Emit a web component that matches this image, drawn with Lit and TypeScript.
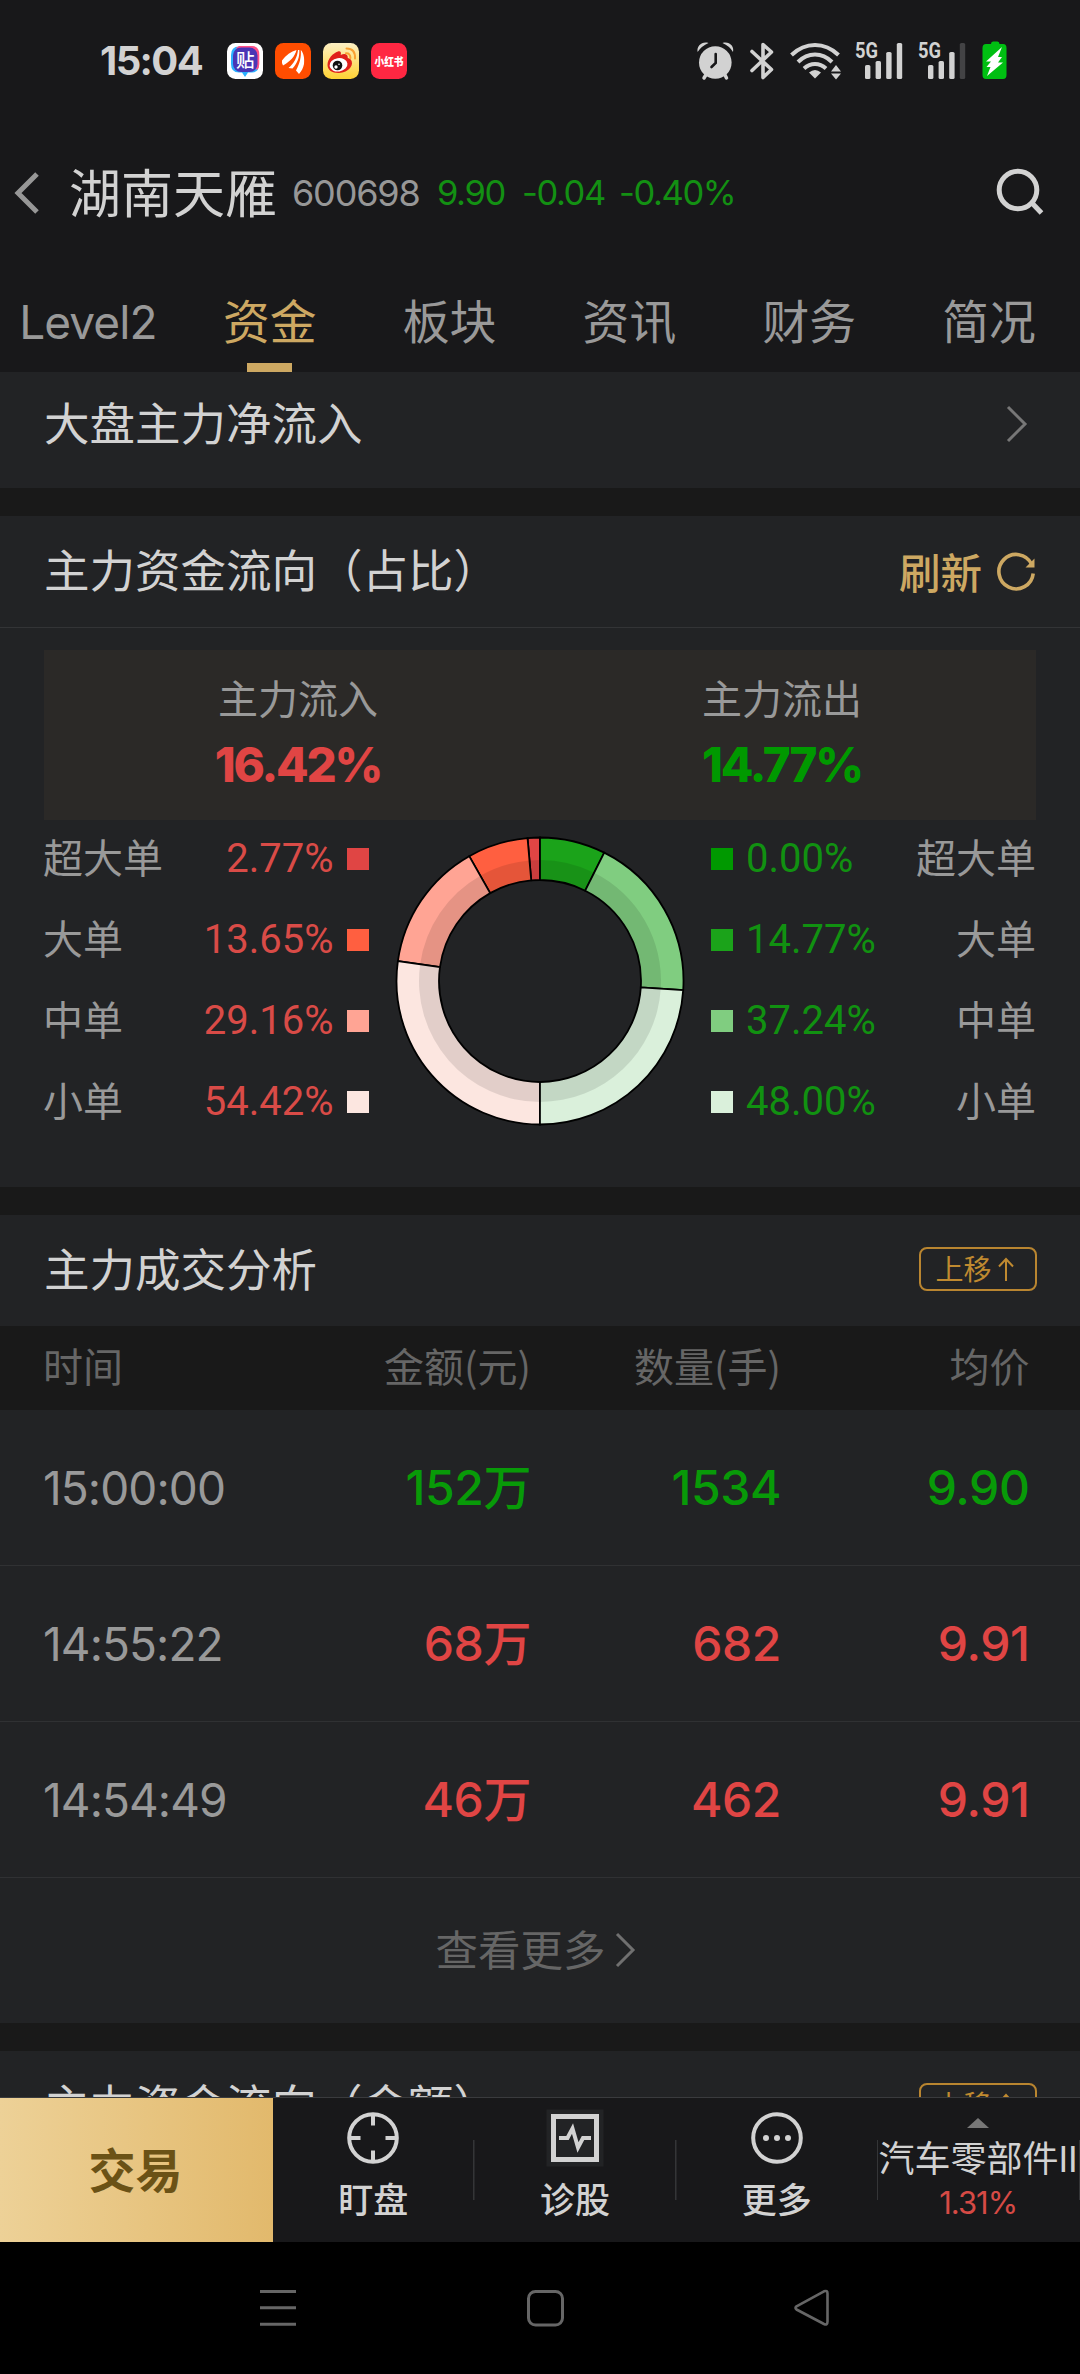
import { LitElement, html, css, svg } from "lit";
import { customElement, property } from "lit/decorators.js";
import { classMap } from "lit/directives/class-map.js";

type Tone = "up" | "down";
interface Slice { label: string; percent: number; color: string; }
interface Trade { time: string; amount: string; volume: string; price: string; tone: Tone; }

const TABS = ["Level2", "资金", "板块", "资讯", "财务", "简况"];

const INFLOW: Slice[] = [
  { label: "超大单", percent: 2.77, color: "#e04544" },
  { label: "大单", percent: 13.65, color: "#ff5f40" },
  { label: "中单", percent: 29.16, color: "#ffa494" },
  { label: "小单", percent: 54.42, color: "#fce6e0" },
];

const OUTFLOW: Slice[] = [
  { label: "超大单", percent: 0, color: "#009900" },
  { label: "大单", percent: 14.77, color: "#1ba31a" },
  { label: "中单", percent: 37.24, color: "#80cd80" },
  { label: "小单", percent: 48, color: "#daf0db" },
];

const TRADES: Trade[] = [
  { time: "15:00:00", amount: "152万", volume: "1534", price: "9.90", tone: "down" },
  { time: "14:55:22", amount: "68万", volume: "682", price: "9.91", tone: "up" },
  { time: "14:54:49", amount: "46万", volume: "462", price: "9.91", tone: "up" },
];

@customElement("flow-donut")
class FlowDonut extends LitElement {
  @property({ attribute: false }) inflow: Slice[] = [];
  @property({ attribute: false }) outflow: Slice[] = [];

  static styles = css`
    :host { display: block; width: 290px; height: 290px; }
    svg { display: block; }
  `;

  private ring(from: number, to: number, outer: number, inner: number) {
    const at = (deg: number, r: number) => {
      const a = (deg * Math.PI) / 180;
      return `${(145 + r * Math.sin(a)).toFixed(2)} ${(145 - r * Math.cos(a)).toFixed(2)}`;
    };
    const sweep = to > from ? 1 : 0;
    return `M${at(from, outer)}A${outer} ${outer} 0 0 ${sweep} ${at(to, outer)}L${at(to, inner)}A${inner} ${inner} 0 0 ${1 - sweep} ${at(from, inner)}Z`;
  }

  private half(slices: Slice[], direction: number) {
    let angle = 0;
    return slices.filter((s) => s.percent > 0).map((s) => {
      const from = angle;
      angle += direction * s.percent * 1.8;
      return svg`
        <path d=${this.ring(from, angle, 143.5, 101)} fill=${s.color}></path>
        <path d=${this.ring(from, angle, 121, 101)} fill="#000" fill-opacity="0.1"></path>
        <path d=${this.ring(from, angle, 143.5, 101)} fill="none" stroke="#000" stroke-width="1.8"></path>`;
    });
  }

  render() {
    return html`<svg width="290" height="290" viewBox="0 0 290 290">
      ${this.half(this.inflow, -1)}${this.half(this.outflow, 1)}
    </svg>`;
  }
}

@customElement("app-root")
class AppRoot extends LitElement {
  static styles = css`
    :host {
      display: flex; flex-direction: column; width: 1080px; height: 2374px; overflow: hidden;
      background: #191919; color: #d2d2d2; line-height: 1; white-space: nowrap;
      font-family: "Noto Sans CJK SC", sans-serif;
    }
    * { box-sizing: border-box; }
    svg { display: block; flex: none; overflow: visible; }
    .num { font-family: Inter, "Noto Sans CJK SC", sans-serif; }
    .up { color: #e04544; }
    .down { color: #089a08; }

    .status { display: flex; align-items: center; justify-content: space-between; height: 121px; padding: 0 73px 0 100px; background: #18181a; flex: none; }
    .clock { font-size: 40px; font-weight: 700; letter-spacing: -1.6px; width: 127px; }
    .apps { display: flex; gap: 12px; flex: 1; }
    .indicators { display: flex; align-items: center; }
    .s14 { width: 14px; } .s13 { width: 13px; }

    .head { display: flex; align-items: center; height: 145px; background: #18181a; flex: none; padding: 0 36px 1px 13px; }
    .name { font-size: 52px; margin: 0 0 0 30px; padding-bottom: 4px; font-weight: 400; width: 223px; }
    .code { font-size: 36px; color: #979797; letter-spacing: -1.2px; width: 145px; }
    .quote { display: flex; font-size: 34.5px; color: #139013; letter-spacing: -1.4px; flex: 1; }
    .q1 { width: 85px; } .q2 { width: 97px; }

    .tabs { display: grid; grid-template-columns: repeat(6, 1fr); height: 106px; background: #18181a; flex: none; padding-right: 1px; }
    .tab { display: flex; flex-direction: column; align-items: center; justify-content: space-between; padding-top: 30px; font-size: 46.8px; color: #999; }
    .tab.latin { font-family: Inter, sans-serif; letter-spacing: -0.9px; padding-top: 33px; font-size: 46px; padding-right: 4px; }
    .tab.on { color: #cda862; }
    .mark { width: 45px; height: 9px; background: #cda862; }

    .body { flex: 1; min-height: 0; overflow: hidden; display: flex; flex-direction: column; gap: 28.5px; }
    .panel { background: #222325; flex: none; }
    .bar { display: flex; align-items: center; justify-content: space-between; height: 111px; padding: 0 43px 0 44px; }
    .title { font-size: 45.5px; font-weight: 400; margin: 0; padding-bottom: 5px; }
    .entry { height: 115.5px; padding: 0 53px 11px 44px; }
    .ruled { border-bottom: 1px solid #333436; height: 112px; }
    .refresh { display: flex; align-items: center; gap: 13px; color: #cda862; font-size: 41.5px; font-weight: 500; }
    .refresh .t { padding-bottom: 0; }
    .chip { display: flex; align-items: center; justify-content: center; gap: 5px; width: 118px; height: 44px; border: 2px solid #b98530; border-radius: 8px; color: #c08a30; font-size: 28px; margin-bottom: 4px; padding-right: 6px; }
    .chip .t { padding-bottom: 2px; }

    .flow { padding: 21.5px 44px 0; height: 558.5px; }
    .totals { display: grid; grid-template-columns: 1fr 1fr; height: 170px; background: #2b2927; padding: 0 12px; }
    .total { display: flex; flex-direction: column; align-items: center; padding-top: 27px; }
    .cap { font-size: 40px; color: #999; }
    .sum { font-size: 47.5px; font-weight: 800; margin-top: 24px; letter-spacing: -2.2px; }
    .total .up { color: #e04544; } .total .down { color: #009900; }
    .split { display: grid; grid-template-columns: 326px 290px 1fr; column-gap: 25px; }
    .split flow-donut { margin-top: 16.5px; }
    .legend { display: flex; flex-direction: column; margin-top: -1px; }
    .leg { display: flex; align-items: center; height: 81px; font-size: 40px; }
    .leg .lab { color: #999; flex: 1; padding-bottom: 6px; }
    .leg .pct { font-family: Roboto, sans-serif; }
    .leg .sw { width: 22px; height: 22px; }
    .leg.up { color: #d94b47; }
    .leg.up .lab { margin-left: -1px; }
    .leg.up .sw { margin: 0 1px 0 13.5px; }
    .leg.down { color: #119111; }
    .leg.down .sw { margin: 0 13px 0 1px; }
    .leg.down .lab { text-align: right; }

    .row { display: grid; grid-template-columns: 241px 247px 250px 1fr; align-items: center; padding: 0 50.5px 0 43px; height: 156px; border-bottom: 1px solid #303133; }
    .row > * { text-align: right; }
    .row > :first-child { text-align: left; }
    .columns { height: 84px; background: #191919; font-size: 40px; color: #666; border: 0; }
    .columns > * { padding-bottom: 6px; }
    .time { font-size: 46px; color: #999; letter-spacing: -0.9px; }
    .val { font-size: 48px; font-weight: 500; letter-spacing: -0.4px; }
    .more { display: flex; align-items: center; justify-content: center; gap: 9px; height: 144.5px; font-size: 42.5px; color: #666; padding-right: 10px; }
    .more .t { padding-bottom: 4px; }

    .dock { display: flex; height: 145px; border-top: 1px solid #3a3b3d; background: #18181a; flex: none; }
    .trade { width: 273px; display: flex; align-items: center; justify-content: center; padding: 0 2px 5px 0; background: linear-gradient(90deg, #edd197, #e2b96c); color: #6b5216; font-size: 47px; font-weight: 700; }
    .item { width: 201.75px; display: flex; flex-direction: column; align-items: center; padding: 11px 1px 0 0; font-size: 35px; font-weight: 500; gap: 13px;
      background: linear-gradient(#343537, #343537) right 42px / 1.5px 60px no-repeat; }
    .board { padding: 20px 2px 0 0; gap: 0; font-weight: 400; font-size: 36px; }
    .board .nm { margin-top: 13px; }
    .board .ch { font-size: 31px; margin-top: 10px; letter-spacing: -1px; color: #d64a45; }
    .nav { display: flex; height: 132px; background: #000; flex: none; padding: 47px 0 0 259px; }
    .nav svg:nth-child(2) { margin-left: 229px; }
    .nav svg:nth-child(3) { margin-left: 229px; }
  `;

  private chevron(w: number, h: number, stroke: number, color: string, back = false) {
    const d = back ? `M${w - 2} 2L5 ${h / 2}L${w - 2} ${h - 2}` : `M2 1L${w - 2} ${h / 2}L2 ${h - 1}`;
    return html`<svg width=${w} height=${h} viewBox="0 0 ${w} ${h}"><path d=${d} fill="none" stroke=${color} stroke-width=${stroke}></path></svg>`;
  }

  private chip() {
    return html`<div class="chip"><span class="t">上移</span>
      <svg width="18" height="26" viewBox="0 0 18 26"><path d="M9 25V3M2 10.5L9 3L16 10.5" fill="none" stroke="#c08a30" stroke-width="2"></path></svg></div>`;
  }

  private bars(level: number) {
    const tops = [64, 60, 51, 42];
    return tops.map((top, i) => svg`<rect x=${10 + i * 10.6} y=${top - 40} width="5.4" height=${78 - top} rx="1.6" fill=${i < level ? "#d2d2d2" : "#434345"}></rect>`);
  }

  private signal(level: number) {
    return html`<svg width="50" height="40" viewBox="0 0 50 40">
      <text x="0" y="16.5" font-family="Roboto, sans-serif" font-weight="700" font-size="21.5" textLength="23" lengthAdjust="spacingAndGlyphs" fill="#d2d2d2">5G</text>
      ${this.bars(level)}</svg>`;
  }

  private statusBar() {
    return html`<div class="status">
      <div class="clock num">15:04</div>
      <div class="apps">
        <svg width="36" height="36" viewBox="0 0 36 36"><rect width="36" height="36" rx="8.5" fill="#fff"></rect>
          <path d="M10 3.5H25Q32 3.5 32 12V21Q32 29.500 25 29.500H21L18 34L15 29.500H12Q4 29.500 4 21V12Q4 3.500 12 3.500Z" fill="#2bb0ff"></path>
          <path d="M12 3H25Q32.300 3 32.300 12V21Q32.300 25 30 27L9 5Z" fill="#ff4f86"></path>
          <rect x="6" y="4.500" width="24.500" height="24.500" rx="8" fill="#4a35b5"></rect>
          <text x="18.300" y="23.800" text-anchor="middle" font-family="Noto Sans CJK SC, sans-serif" font-size="18.500" font-weight="500" fill="#fff">贴</text></svg>
        <svg width="36" height="36" viewBox="0 0 36 36"><rect width="36" height="36" rx="8.5" fill="#ff4d00"></rect>
          <g fill="#fff"><path d="M7 17.500C11 12 16 8.500 21.500 7C20 13.500 15 18.500 8 22.500Q6.500 20 7 17.500Z"></path>
          <path d="M13.500 25C19 20.500 22.300 14 23 7H24.300C24.800 14 22.500 20 17.500 25.500Z"></path>
          <path d="M21 27.500C25 20 26.300 14 25.800 7C28.500 9.500 29.700 15 29 21C28.300 25 26.500 28 24 31Z"></path></g></svg>
        <svg width="36" height="36" viewBox="0 0 36 36"><defs><linearGradient id="wb" x2="0" y2="1"><stop stop-color="#fdf0c4"></stop><stop offset="1" stop-color="#ffd233"></stop></linearGradient></defs>
          <rect width="36" height="36" rx="8.500" fill="url(#wb)"></rect>
          <path d="M4.500 22C4.500 16 10 10 15 8.500C17.500 7.800 18.500 9.500 17.700 12C21 10.500 25 10.500 24.800 15C28 16 29 17.500 29 20.500C28.500 26 22 30 15.500 30C9 30 4.500 27 4.500 22Z" fill="#e0201b"></path>
          <ellipse cx="15.500" cy="21.800" rx="9" ry="6.700" fill="#fff" transform="rotate(-8 15.500 21.800)"></ellipse>
          <circle cx="14.500" cy="22.500" r="4.800" fill="#111"></circle><circle cx="13" cy="24" r="1.700" fill="#fff"></circle><circle cx="16" cy="21.300" r="0.800" fill="#fff"></circle>
          <path d="M23 10.300Q27.300 10 27.400 15M23.500 5.500Q32.500 5.500 32 15.500" stroke="#f9a132" stroke-width="2" fill="none" stroke-linecap="round"></path></svg>
        <svg width="36" height="36" viewBox="0 0 36 36"><rect width="36" height="36" rx="8.500" fill="#ff2742"></rect>
          <text x="3.500" y="22.500" font-family="Noto Sans CJK SC, sans-serif" font-size="11.500" font-weight="900" textLength="29" lengthAdjust="spacingAndGlyphs" fill="#fff">小红书</text></svg>
      </div>
      <div class="indicators">
        <svg width="37" height="40" viewBox="0 0 37 40" fill="#d2d2d2">
          <path d="M7 37L10 32M29.500 37L27 32" stroke="#d2d2d2" stroke-width="3.500" stroke-linecap="round"></path>
          <circle cx="18.300" cy="21.500" r="16.300"></circle>
          <path d="M0.600 11C-0.500 5 5 0 11.500 2Q4.500 5 0.600 11ZM36 11C37.500 5 32 0 25.500 2Q32.500 5 36 11Z"></path>
          <path d="M18.700 13V22L14.500 26" fill="none" stroke="#18181a" stroke-width="2.600" stroke-linecap="round"></path></svg>
        <svg width="56" height="40" viewBox="0 0 56 40"><path d="M18 10.500L37.500 28.500L29 36.500V3.500L37.500 11L18 29.500" fill="none" stroke="#d2d2d2" stroke-width="3.600" stroke-linecap="round" stroke-linejoin="round"></path></svg>
        <svg width="51" height="40" viewBox="0 0 51 40" fill="none" stroke="#d2d2d2" stroke-width="4">
          <path d="M1.500 14Q12 4 25 4T48.500 14M8 21Q15.500 13.500 25 13.500T42 21M14 27.500Q19 23 25 23T36 27.500"></path>
          <path d="M19 31.500Q25 26.500 31 31.500L25 37.500Z" fill="#d2d2d2" stroke="none"></path>
          <path d="M41 30.500L46 24L51 30.500ZM41 32.500L46 38.500L51 32.500Z" fill="#d2d2d2" stroke="none"></path></svg>
        <div class="s14"></div>${this.signal(4)}<div class="s13"></div>${this.signal(3)}
        <svg width="39" height="40" viewBox="0 0 39 40"><path d="M18 3H23Q23 0.500 25 0.500H29.500Q31.500 0.500 31.500 3H35Q38.500 3 38.500 7V34Q38.500 38 35 38H18Q14.500 38 14.500 34V7Q14.500 3 18 3Z" fill="#00bf12"></path>
          <path d="M34 6L18 20.500H23L18.500 26H22.500L19 35L35 21.500H30L34 16H30Z" fill="#fff"></path></svg>
      </div>
    </div>`;
  }

  private legend(slices: Slice[], tone: Tone) {
    return html`<div class="legend">${slices.map((s) => {
      const lab = html`<span class="lab">${s.label}</span>`;
      const pct = html`<span class="pct">${s.percent.toFixed(2)}%</span>`;
      const sw = html`<span class="sw" style="background:${s.color}"></span>`;
      return html`<div class="leg ${tone}">${tone === "up" ? [lab, pct, sw] : [sw, pct, lab]}</div>`;
    })}</div>`;
  }

  render() {
    return html`
      ${this.statusBar()}
      <div class="head">
        ${this.chevron(26, 42, 5, "#979797", true)}
        <h1 class="name">湖南天雁</h1>
        <span class="code num">600698</span>
        <div class="quote num"><span class="q1">9.90</span><span class="q2">-0.04</span><span>-0.40%</span></div>
        <svg width="48" height="48" viewBox="0 0 48 48" fill="none" stroke="#d2d2d2" stroke-width="5"><circle cx="22" cy="21" r="18.800"></circle><path d="M35.500 33.500L45.500 44"></path></svg>
      </div>
      <div class="tabs">${TABS.map((t, i) => html`<div class=${classMap({ tab: true, latin: i === 0, on: i === 1 })}><span>${t}</span>${i === 1 ? html`<i class="mark"></i>` : ""}</div>`)}</div>
      <div class="body">
        <section class="panel bar entry"><h2 class="title">大盘主力净流入</h2>${this.chevron(21, 36, 3, "#777")}</section>
        <section class="panel">
          <div class="bar ruled"><h2 class="title">主力资金流向（占比）</h2>
            <div class="refresh"><span class="t">刷新</span>
              <svg width="42" height="42" viewBox="0 0 42 42"><path d="M36.500 13A17.200 17.200 0 1 0 38.200 22.500" fill="none" stroke="#cda862" stroke-width="3.600"></path><path d="M39.500 7.500V16.500H30.500Z" fill="#cda862"></path></svg>
            </div></div>
          <div class="flow">
            <div class="totals">
              <div class="total"><span class="cap">主力流入</span><b class="sum num up">16.42%</b></div>
              <div class="total"><span class="cap">主力流出</span><b class="sum num down">14.77%</b></div>
            </div>
            <div class="split">${this.legend(INFLOW, "up")}<flow-donut .inflow=${INFLOW} .outflow=${OUTFLOW}></flow-donut>${this.legend(OUTFLOW, "down")}</div>
          </div>
        </section>
        <section class="panel">
          <div class="bar"><h2 class="title">主力成交分析</h2>${this.chip()}</div>
          <div class="row columns"><span>时间</span><span>金额(元)</span><span>数量(手)</span><span>均价</span></div>
          ${TRADES.map((t) => html`<div class="row"><span class="num time">${t.time}</span><span class="num val ${t.tone}">${t.amount}</span><span class="num val ${t.tone}">${t.volume}</span><span class="num val ${t.tone}">${t.price}</span></div>`)}
          <div class="more"><span class="t">查看更多</span>${this.chevron(20, 34, 3, "#707070")}</div>
        </section>
        <section class="panel"><div class="bar"><h2 class="title">主力资金流向（金额）</h2>${this.chip()}</div></section>
      </div>
      <div class="dock">
        <div class="trade">交易</div>
        <div class="item">
          <svg width="58" height="58" viewBox="0 0 58 58" fill="none" stroke="#d2d2d2" stroke-width="4"><circle cx="29" cy="29" r="23.800"></circle><path d="M29 5V16.500M29 41.500V53M5 29H16.500M41.500 29H53"></path></svg><span>盯盘</span></div>
        <div class="item">
          <svg width="58" height="58" viewBox="0 0 58 58" fill="none" stroke="#d2d2d2"><rect x="0.500" y="0.500" width="57" height="57" fill="#222325" stroke="none"></rect><rect x="7.500" y="7.500" width="43" height="43" stroke-width="5"></rect><path d="M13 29H21.500L26.500 19.500L32 38.500L37 29H45" stroke-width="4"></path></svg><span>诊股</span></div>
        <div class="item">
          <svg width="58" height="58" viewBox="0 0 58 58"><circle cx="29" cy="29" r="23.800" fill="none" stroke="#d2d2d2" stroke-width="4"></circle><g fill="#d2d2d2"><circle cx="18" cy="29" r="3"></circle><circle cx="29" cy="29" r="3"></circle><circle cx="40" cy="29" r="3"></circle></g></svg><span>更多</span></div>
        <div class="item board"><svg width="22" height="10" viewBox="0 0 22 10"><path d="M0 10L11 0L22 10Z" fill="#777"></path></svg><span class="nm num">汽车零部件II</span><span class="ch num">1.31%</span></div>
      </div>
      <div class="nav">
        <svg width="38" height="38" viewBox="0 0 38 38" stroke="#666" stroke-width="3"><path d="M1 2.500H37M1 18.800H37M1 35.300H37"></path></svg>
        <svg width="38" height="38" viewBox="0 0 38 38" fill="none" stroke="#666" stroke-width="3"><rect x="2.500" y="2.500" width="34" height="33.500" rx="7"></rect></svg>
        <svg width="38" height="38" viewBox="0 0 38 38" fill="none" stroke="#666" stroke-width="2.600" stroke-linejoin="round"><path d="M3.500 17.300L31 2.300Q34.500 1 34.500 4.500V32.500Q34.500 36.500 31 35L3.500 20.500Q1.500 19 3.500 17.300Z"></path></svg>
      </div>`;
  }
}
